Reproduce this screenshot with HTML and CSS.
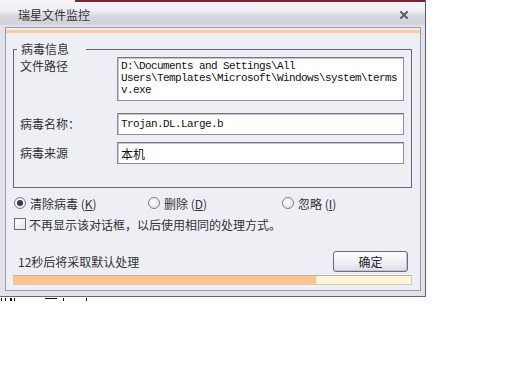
FILE: index.html
```html
<!DOCTYPE html>
<html>
<head>
<meta charset="utf-8">
<link rel="stylesheet" href="styles.css">
</head>
<body>
<div class="win">
  <div class="titlebar">
    <span class="title">瑞星文件监控</span>
    <svg class="close" width="8" height="8" viewBox="0 0 8 8"><path d="M1 1L7 7M7 1L1 7" stroke="#5c5c66" stroke-width="2" stroke-linecap="square"/></svg>
  </div>
  <div class="panel">
    <div class="accent"></div>
    <fieldset class="group">
      <legend>病毒信息</legend>
      <div class="row row-top">
        <span class="lbl lbl-top">文件路径</span>
        <div class="box box-multi mono">D:\Documents and Settings\All<br>Users\Templates\Microsoft\Windows\system\terms<br>v.exe</div>
      </div>
      <div class="row row-name">
        <span class="lbl">病毒名称：</span>
        <div class="box mono">Trojan.DL.Large.b</div>
      </div>
      <div class="row row-src">
        <span class="lbl">病毒来源</span>
        <div class="box">本机</div>
      </div>
    </fieldset>
    <div class="options">
      <div class="opt"><span class="radio checked"><span class="dot"></span></span><span>清除病毒 (<u>K</u>)</span></div>
      <div class="opt"><span class="radio"></span><span>删除 (<u>D</u>)</span></div>
      <div class="opt"><span class="radio"></span><span>忽略 (<u>I</u>)</span></div>
    </div>
    <div class="check"><span class="cbox"></span><span>不再显示该对话框，以后使用相同的处理方式。</span></div>
    <div class="footer">
      <span class="countdown">12秒后将采取默认处理</span>
      <button class="btn">确定</button>
    </div>
    <div class="progress"><div class="fill" style="width:76%"></div></div>
  </div>
</div>
<div class="behind">
  <span class="mark m1"></span><span class="mark m2"></span><span class="mark m3"></span><span class="mark m4"></span><span class="mark m5"></span><span class="mark m6"></span><span class="mark m7"></span>
</div>
</body>
</html>
```

FILE: styles.css
```css
body {
  margin: 0;
  background: #ffffff;
  font-family: "Noto Sans CJK SC", "Noto Sans", sans-serif;
  font-size: 12px;
  color: #2a2a2a;
}

.win {
  width: 425px;
  height: 296px;
  background: #e2e2ea;
  border-right: 1px solid #5c5c78;
  border-bottom: 1px solid #6a6a7a;
  display: flex;
  flex-direction: column;
}

.titlebar {
  flex: none;
  height: 27px;
  box-sizing: border-box;
  padding: 2px 17px 0 18px;
  display: flex;
  align-items: center;
  justify-content: space-between;
  background:
    linear-gradient(to right, #f4f4f6 0 75px, #7a2434 75px) top / 100% 2px no-repeat,
    linear-gradient(#f7f7fa, #efeff4 40%, #d6d6de 62%, #d2d2da 88%, #e6e6ec);
}

.title {
  line-height: 14px;
  color: #333;
}

.close {
  display: block;
}

.panel {
  margin: 0 4px 0 5px;
  border: 1px solid #9a9aaa;
  background: #eeeff5;
  padding-bottom: 5px;
}

.accent {
  margin-top: 2px;
  height: 3px;
  background: #fdcb9c;
}

.group {
  margin: 9px 8px 0 7px;
  padding: 0 7px 23px 6px;
  border: 1px solid #66667a;
  min-inline-size: 0;
}

.group legend {
  margin-left: -3px;
  padding: 0 17px 0 4px;
  line-height: 14px;
  color: #333;
}

.row {
  display: flex;
  align-items: center;
}

.row-top {
  align-items: flex-start;
  margin-top: 1px;
}

.row-name {
  margin-top: 12px;
}

.row-src {
  margin-top: 7px;
}

.lbl {
  width: 97px;
  flex: none;
  line-height: 14px;
  color: #333;
}

.lbl-top {
  padding-top: 2px;
}

.box {
  width: 287px;
  height: 22px;
  box-sizing: border-box;
  background: #fff;
  border: 1px solid #8e8e9c;
  border-top-color: #76768a;
  box-shadow: inset 1px 1px 0 #c4c4ce;
  padding: 0 2px 0 3px;
  display: flex;
  align-items: center;
  color: #111;
}

.box-multi {
  height: 44px;
  display: block;
  padding-top: 2px;
  line-height: 12px;
}

.mono {
  font-family: "Liberation Mono", monospace;
  font-size: 11px;
  letter-spacing: -0.6px;
}

.options {
  display: flex;
  align-items: center;
  height: 14px;
  margin-top: 8px;
  padding-left: 8px;
}

.opt {
  width: 134px;
  display: flex;
  align-items: center;
  gap: 4px;
  color: #333;
}

.radio {
  width: 12px;
  height: 12px;
  box-sizing: border-box;
  border: 1px solid #7c7c8e;
  border-radius: 50%;
  background: radial-gradient(circle at 40% 40%, #ffffff, #dcdce4);
  display: flex;
  align-items: center;
  justify-content: center;
}

.dot {
  width: 6px;
  height: 6px;
  border-radius: 50%;
  background: #3a3a44;
}

.check {
  display: flex;
  align-items: center;
  gap: 3px;
  height: 14px;
  margin-top: 7px;
  padding-left: 8px;
  color: #333;
}

.cbox {
  width: 12px;
  height: 12px;
  box-sizing: border-box;
  border: 1px solid #6c6c7e;
  background: linear-gradient(135deg, #ffffff, #e4e4ea);
}

.footer {
  display: flex;
  align-items: center;
  justify-content: space-between;
  margin-top: 20px;
  padding: 0 12px;
}

.countdown {
  color: #333;
}

.btn {
  width: 75px;
  height: 21px;
  box-sizing: border-box;
  border: 1px solid #6c6c7c;
  border-radius: 3px;
  background: linear-gradient(#fdfdfe, #f1f1f5 50%, #dedee6);
  box-shadow: inset -1px -1px 0 #c4c4cc;
  font: inherit;
  color: #222;
  padding: 0;
}

.progress {
  margin: 3px 8px 0 7px;
  height: 10px;
  box-sizing: border-box;
  border: 1px solid #d8cbb6;
  border-top-color: #bcb2a8;
  background: #fdf5d9;
}

.fill {
  height: 100%;
  background: #fdc48e;
}

.behind {
  display: flex;
  align-items: flex-start;
  height: 4px;
  margin-top: 1px;
}

.mark {
  height: 3px;
  background: #111;
}

.m1 { width: 1px; margin-left: 1px; }
.m2 { width: 1px; margin-left: 3px; }
.m3 { width: 2px; margin-left: 4px; }
.m4 { width: 1px; margin-left: 2px; }
.m5 { width: 12px; height: 1px; margin-left: 30px; }
.m6 { width: 1px; margin-left: 6px; }
.m7 { width: 1px; margin-left: 22px; }
```
